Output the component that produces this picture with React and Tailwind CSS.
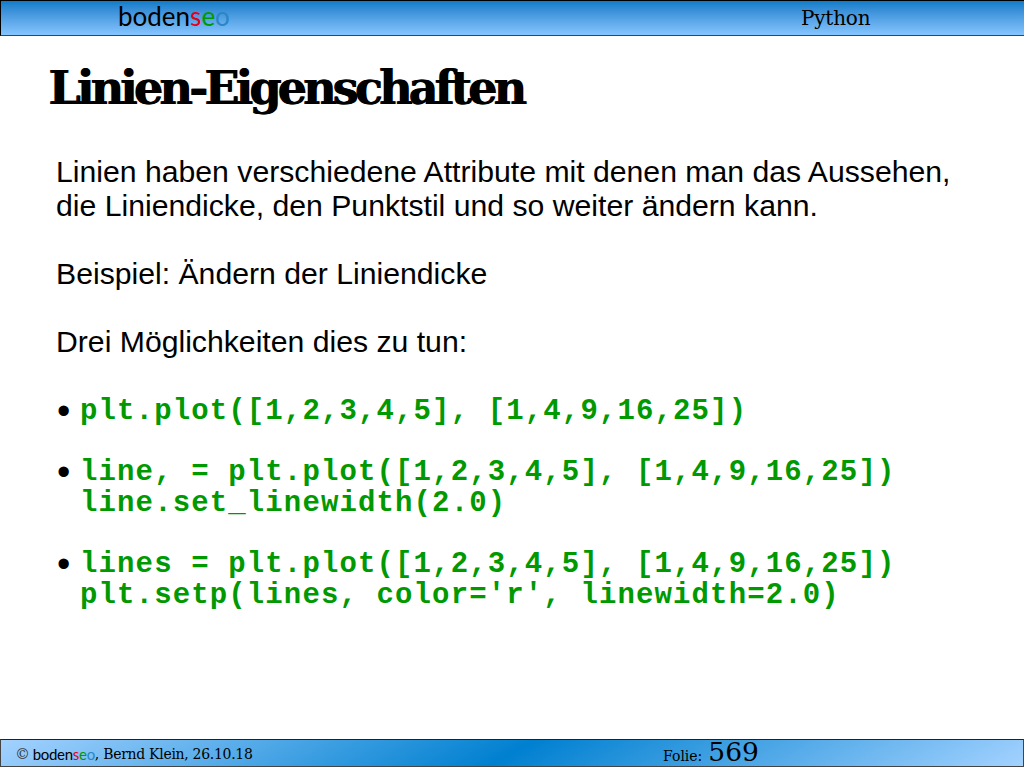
const Logo = ({ size }) => (
  <span className={`font-['Lato',sans-serif] ${size}`}>
    boden<span className="text-[#e2001a]">s</span>
    <span className="text-[#009900]">e</span>
    <span className="text-[#2a86c4]">o</span>
  </span>
);

const CodeItem = ({ lines }) => (
  <li className="flex">
    <span className="w-[23px] font-['Liberation_Sans',sans-serif] text-[38px] leading-[31px] text-black">•</span>
    <pre className="font-['Liberation_Mono',monospace] text-[29px] leading-[31px] font-bold tracking-[1.13px] text-[#009900]">
      {lines.join("\n")}
    </pre>
  </li>
);

export default function App() {
  return (
    <div className="flex h-[768px] w-[1024px] flex-col overflow-hidden bg-white">
      {/* top bar */}
      <header className="flex h-[36px] items-center border-t border-b border-l border-t-black border-b-[#444] border-l-black bg-gradient-to-b from-[#0a7cc9] to-[#85c5ff] text-black">
        <div className="mb-[5px] w-[800px] pl-[117px] leading-none">
          <Logo size="text-[26px]" />
        </div>
        <div className="font-['DejaVu_Serif',serif] text-[20px] tracking-[-0.2px]">Python</div>
      </header>

      <main className="flex-1 pt-[25px] pl-[48px]">
        <h1 className="font-['DejaVu_Serif',serif] text-[46px] leading-[54px] font-bold tracking-[-3.8px] text-black [text-shadow:1px_0_0_#000]">
          Linien-Eigenschaften
        </h1>

        <div className="mt-[40px] pl-[8px] font-['Liberation_Sans',sans-serif] text-[30.2px] leading-[34px] text-black">
          <p>
            Linien haben verschiedene Attribute mit denen man das Aussehen,
            <br />
            die Liniendicke, den Punktstil und so weiter ändern kann.
          </p>
          <p className="mt-[34px]">Beispiel: Ändern der Liniendicke</p>
          <p className="mt-[34px]">Drei Möglichkeiten dies zu tun:</p>
        </div>

        <ul className="mt-[37px] flex flex-col gap-[30px] pl-[9px]">
          <CodeItem lines={["plt.plot([1,2,3,4,5], [1,4,9,16,25])"]} />
          <CodeItem
            lines={["line, = plt.plot([1,2,3,4,5], [1,4,9,16,25])", "line.set_linewidth(2.0)"]}
          />
          <CodeItem
            lines={["lines = plt.plot([1,2,3,4,5], [1,4,9,16,25])", "plt.setp(lines, color='r', linewidth=2.0)"]}
          />
        </ul>
      </main>

      {/* bottom bar */}
      <footer className="mb-px flex h-[28px] items-center border border-[#444] border-t-[#222] bg-[linear-gradient(150deg,#a3d2ff,#0080d0,#a3d2ff)] pl-[14px] text-black">
        <div className="mt-[3px] flex w-[648px] items-center whitespace-pre font-['DejaVu_Serif',serif] text-[14px] tracking-[-0.3px]">
          <span className="text-[15px] text-[#333]">©</span>
          <span className="w-[3px]" />
          <Logo size="text-[15px]" />
          <span>, Bernd Klein, 26.10.18</span>
        </div>
        <div className="flex items-baseline font-['DejaVu_Serif',serif] text-[14px]">
          Folie:
          <span className="ml-[6px] font-['DejaVu_Serif',serif] text-[26.5px] leading-none">569</span>
        </div>
      </footer>
    </div>
  );
}
